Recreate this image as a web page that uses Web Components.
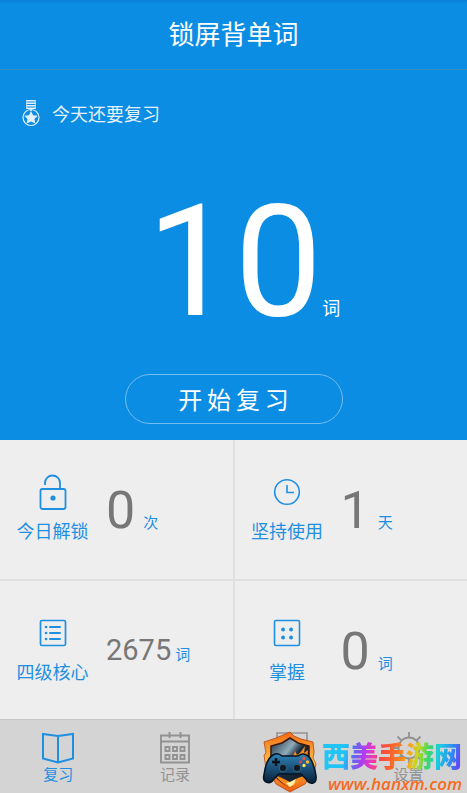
<!DOCTYPE html>
<html lang="zh-CN">
<head>
<meta charset="utf-8">
<meta name="viewport" content="width=device-width, initial-scale=1">
<title>锁屏背单词</title>
<style>
  body {
    margin: 0;
    background: #eee;
    font-family: Roboto, "Noto Sans CJK SC", sans-serif;
  }
</style>
</head>
<body>
<word-app>
  <app-header>锁屏背单词</app-header>
  <review-hero label="今天还要复习" count="10" unit="词"></review-hero>
  <stat-grid>
    <stat-card icon="lock" label="今日解锁" value="0" unit="次"></stat-card>
    <stat-card icon="clock" label="坚持使用" value="1" unit="天"></stat-card>
    <stat-card icon="list" label="四级核心" value="2675" unit="词" compact></stat-card>
    <stat-card icon="dice" label="掌握" value="0" unit="词"></stat-card>
  </stat-grid>
  <tab-bar>
    <tab-item icon="book" active>复习</tab-item>
    <tab-item icon="calendar">记录</tab-item>
    <tab-item icon="words"></tab-item>
    <tab-item icon="gear">设置</tab-item>
  </tab-bar>
  <site-badge slot="overlay"></site-badge>
</word-app>

<script>
const icons = {
  medal: `<svg width="18" height="27" viewBox="0 0 18 27" fill="none" stroke="#e4f1fb">
    <path d="M4.500 .8h9M4.500 3.300h9M4.500 5.800h9M4.500 8.200h9M9 8v3" stroke-width="1.500"/>
    <path d="M4.700 0v9M13.300 0v9" stroke-width=".8"/>
    <circle cx="9" cy="17.500" r="8" stroke-width="1.200"/>
    <path d="M9 11l2.100 4.300 4.700.5-3.400 3.200 1 4.600L9 21.400l-4.400 2.200 1-4.600-3.400-3.200 4.700-.5z" fill="#e4f1fb" stroke="none"/></svg>`,
  lock: `<svg width="28" height="36" viewBox="0 0 28 36" fill="none" stroke="currentColor" stroke-width="1.800">
    <rect x="1.500" y="15" width="25" height="20" rx="2"/>
    <path d="M6 11V9a7.500 7.500 0 0 1 15 0v6"/>
    <circle cx="14" cy="24" r="2.600" fill="currentColor" stroke="none"/></svg>`,
  clock: `<svg width="28" height="28" viewBox="0 0 28 28" fill="none" stroke="currentColor" stroke-width="1.600">
    <circle cx="14" cy="14" r="12.300"/><path d="M14 7v7.500h7"/></svg>`,
  list: `<svg width="28" height="28" viewBox="0 0 28 28" fill="none" stroke="currentColor" stroke-width="1.700">
    <rect x="1.500" y="1.500" width="25" height="25" rx="1.500"/>
    <path d="M11 8h10M11 14h10M11 20h10" stroke-width="2" stroke-linecap="round"/>
    <path d="M7 8h.1M7 14h.1M7 20h.1" stroke-width="2.600" stroke-linecap="round"/></svg>`,
  dice: `<svg width="28" height="28" viewBox="0 0 28 28" fill="none" stroke="currentColor" stroke-width="1.600">
    <rect x="1.500" y="1.500" width="25" height="25" rx="1.500"/>
    <path d="M10 10.500h.1M18 10.500h.1M10 18.500h.1M18 18.500h.1" stroke-width="3.800" stroke-linecap="round"/></svg>`,
  book: `<svg width="32" height="32" viewBox="0 0 32 32" fill="none" stroke="currentColor" stroke-width="2">
    <path d="M1 2l15 2 15-2v24.500l-15 4-15-4zM16 4v26"/></svg>`,
  calendar: `<svg width="32" height="32" viewBox="0 0 32 32" fill="none" stroke="currentColor" stroke-width="1.900">
    <path d="M2 3.500h28v27H2zM2 9.500h28M10.500 0v6M21.500 0v6"/>
    <path d="M6.500 15h4v4h-4zM14 15h4v4h-4zM21.500 15h4v4h-4zM6.500 23h4v4h-4zM14 23h4v4h-4zM21.500 23h4v4h-4z"/></svg>`,
  words: `<svg width="32" height="32" viewBox="0 0 32 32" fill="none" stroke="currentColor" stroke-width="1.600">
    <path d="M1 1h30v29H1zM8 9h16M8 16h16M8 23h10"/></svg>`,
  gear: `<svg width="32" height="32" viewBox="0 0 32 32" fill="none" stroke="currentColor" stroke-width="1.800">
    <circle cx="16" cy="16" r="10.500"/>
    <path d="M16 0v5M16 27v5M4.500 4.500l4 4M23.500 23.500l4 4M27.500 4.500l-4 4M8.500 23.500l-4 4M1 16h4.500M26.500 16H31"/></svg>`,
};

class WordApp extends HTMLElement {
  constructor() {
    super();
    this.attachShadow({ mode: "open" }).innerHTML = `
      <style>
        :host {
          display: flex;
          flex-direction: column;
          position: relative;
          min-height: 100vh;
        }
        /* the watermark floats over the tab bar */
        ::slotted([slot="overlay"]) {
          position: absolute;
          right: 5px;
          bottom: 0;
        }
      </style>
      <slot></slot>
      <slot name="overlay"></slot>
    `;
  }
}

class AppHeader extends HTMLElement {
  constructor() {
    super();
    this.attachShadow({ mode: "open" }).innerHTML = `
      <style>
        :host {
          display: block;
          background: linear-gradient(#087fd5, #0b8de4 4px);
          border-bottom: 1px solid #3a8cc4;
          color: #fff;
        }
        h1 {
          margin: 0;
          padding-top: 1px;
          font-size: 26px;
          font-weight: 400;
          line-height: 68px;
          text-align: center;
        }
      </style>
      <h1><slot></slot></h1>
    `;
  }
}

class ReviewHero extends HTMLElement {
  connectedCallback() {
    this.attachShadow({ mode: "open" }).innerHTML = `
      <style>
        :host {
          display: flex;
          flex-direction: column;
          background: #0b8de4;
          color: #fff;
          padding: 27px 22px 16px;
        }
        .label {
          display: flex;
          align-items: center;
          gap: 12px;
          height: 32px;
          color: #e4f1fb;
          font-size: 18px;
        }
        .count {
          display: flex;
          align-items: baseline;
          justify-content: center;
          padding: 47px 20px 26px 40px;
          line-height: 172px;
          font-size: 156px;
        }
        .unit {
          font-size: 18px;
          line-height: 24px;
        }
        button {
          align-self: center;
          width: 218px;
          height: 50px;
          padding: 0 0 2px;
          border: 1px solid #75bdf0;
          border-radius: 25px;
          background: none;
          color: inherit;
          font: inherit;
          font-size: 24px;
          cursor: pointer;
        }
      </style>
      <div class="label">${icons.medal}<span>${this.getAttribute("label")}</span></div>
      <div class="count"><span>${this.getAttribute("count")}</span><span class="unit">${this.getAttribute("unit")}</span></div>
      <button type="button">开&thinsp;始&thinsp;复&thinsp;习</button>
    `;
  }
}

class StatGrid extends HTMLElement {
  constructor() {
    super();
    this.attachShadow({ mode: "open" }).innerHTML = `
      <style>
        :host {
          display: grid;
          grid-template-columns: 1fr 1fr;
          grid-auto-rows: 1fr;
          gap: 2px;
          flex: 1;
          background: #e0e0e0;
        }
      </style>
      <slot></slot>
    `;
  }
}

class StatCard extends HTMLElement {
  connectedCallback() {
    this.attachShadow({ mode: "open" }).innerHTML = `
      <style>
        :host {
          display: flex;
          align-items: center;
          gap: 17px;
          box-sizing: border-box;
          min-height: 138px;
          padding: 0 16px;
          background: #eee;
          color: #1e8fe1;
        }
        .name {
          display: grid;
          grid-template-rows: 36px 24px;
          place-items: center;
          gap: 10px;
          width: 73px;
          font-size: 18px;
          line-height: 24px;
        }
        svg { display: block; }
        .value {
          display: flex;
          align-items: baseline;
          gap: 8px;
          padding-top: 4px;
          font-size: 15px;
        }
        .value b {
          color: #777;
          font-size: 52px;
          font-weight: 400;
          line-height: 60px;
        }
        :host([compact]) .value {
          gap: 4px;
          padding-top: 0;
        }
        :host([compact]) b { font-size: 29px; }
      </style>
      <div class="name">${icons[this.getAttribute("icon")]}<span>${this.getAttribute("label")}</span></div>
      <div class="value"><b>${this.getAttribute("value")}</b><span>${this.getAttribute("unit")}</span></div>
    `;
  }
}

class TabBar extends HTMLElement {
  constructor() {
    super();
    this.attachShadow({ mode: "open" }).innerHTML = `
      <style>
        :host { display: block; }
        nav {
          display: grid;
          grid-template-columns: repeat(4, 1fr);
          border-top: 1px solid #c6c6c6;
          background: #d4d4d4;
        }
      </style>
      <nav><slot></slot></nav>
    `;
  }
}

class TabItem extends HTMLElement {
  connectedCallback() {
    this.attachShadow({ mode: "open" }).innerHTML = `
      <style>
        :host {
          display: block;
          color: #929292;
        }
        :host([active]) { color: #1e8fe1; }
        a {
          display: flex;
          flex-direction: column;
          align-items: center;
          height: 61px;
          padding-top: 12px;
          color: inherit;
          font-size: 15px;
          line-height: 22px;
          text-decoration: none;
        }
      </style>
      <a href="#${this.getAttribute("icon")}">${icons[this.getAttribute("icon")]}<span><slot></slot></span></a>
    `;
  }
}

class SiteBadge extends HTMLElement {
  constructor() {
    super();
    this.attachShadow({ mode: "open" }).innerHTML = `
      <style>
        :host {
          display: flex;
          align-items: flex-end;
          gap: 4px;
        }
        .text {
          display: flex;
          flex-direction: column;
          align-items: flex-end;
        }
        .name {
          font-size: 28px;
          font-weight: 900;
          line-height: 34px;
          color: transparent;
          background: linear-gradient(100deg, #20c4f5 0 17%, #5a6cf5 23%, #b03cf0 30%, #f03ab0 37%, #fb4a40 43%, #fb7a20 54%, #fba51c 61%, #c8d820 67%, #40d860 74%, #18d0e0 81%, #2a90f5 90%, #7038f0 98%);
          background-clip: text;
          -webkit-background-clip: text;
        }
        .url {
          color: #f76b1c;
          font: italic 600 17px/18px "Open Sans", sans-serif;
        }
      </style>
      <svg width="56" height="62" viewBox="0 0 56 62">
        <defs>
          <linearGradient id="fire" x1="0" y1="0" x2="0" y2="1">
            <stop offset="0" stop-color="#f36a12"/><stop offset=".5" stop-color="#ffc04a"/><stop offset="1" stop-color="#ee5a10"/>
          </linearGradient>
          <linearGradient id="steel" x1="0" y1="0" x2="1" y2="1">
            <stop offset="0" stop-color="#1b2c3c"/><stop offset=".35" stop-color="#8fabbb"/><stop offset=".5" stop-color="#1c2c3b"/><stop offset="1" stop-color="#0c1722"/>
          </linearGradient>
          <linearGradient id="pad" x1="0" y1="0" x2="0" y2="1">
            <stop offset="0" stop-color="#2f86b8"/><stop offset=".5" stop-color="#1a4f78"/><stop offset="1" stop-color="#0a2036"/>
          </linearGradient>
        </defs>
        <path d="M28 1l4 4 7 3 12 3 1 10-1 6 3 6-2 9-5 5-4 6-15 8-14-8-4-7-6-6-1-9-1-7 2-2-2-11 12-4 7-3z" fill="url(#fire)" stroke="#b8440c" stroke-width=".8"/>
        <path d="M28 7l8 5 11 3v17c0 12-9 18-19 24C18 51 9 44 9 33V15l11-3z" fill="url(#steel)" stroke="#38180d" stroke-width="1.500"/>
        <path d="M27 27c3-1 5-3 6-7l2 4c4-2 5-5 8-9l-1 7 4-3-1 9zM20 47l8 4 8-4 8-3c-3 6-10 9-16 13-6-4-11-7-15-13z" fill="#f98a1b"/>
        <path d="M28 51l6-3-2 5-4 3-4-4z" fill="#fff0aa"/>
        <path d="M11 24q5-3 9 1h16q5-4 10 0c4 3 7 13 8 20 1 9-7 9-10 3l-5-5H17l-5 5c-4 6-12 4-10-4 1-8 4-17 9-20z" fill="url(#pad)" stroke="#071524" stroke-width="1.600"/>
        <path d="M14 27v8M10 31h8" stroke="#08121d" stroke-width="2.500"/>
        <circle cx="21" cy="37" r="3.800" fill="#101a25" stroke="#326887"/><circle cx="35" cy="37" r="3.800" fill="#101a25" stroke="#326887"/>
        <circle cx="42" cy="27.500" r="1.700" fill="#f0533a"/><circle cx="38.500" cy="31" r="1.700" fill="#dc3e5b"/>
        <circle cx="45.500" cy="31" r="1.700" fill="#ffb62f"/><circle cx="42" cy="34.500" r="1.700" fill="#ffe24a"/>
      </svg>
      <div class="text"><span class="name">西美手游网</span><span class="url">www.hanxm.com</span></div>
    `;
  }
}

customElements.define("word-app", WordApp);
customElements.define("app-header", AppHeader);
customElements.define("review-hero", ReviewHero);
customElements.define("stat-grid", StatGrid);
customElements.define("stat-card", StatCard);
customElements.define("tab-bar", TabBar);
customElements.define("tab-item", TabItem);
customElements.define("site-badge", SiteBadge);
</script>
</body>
</html>
